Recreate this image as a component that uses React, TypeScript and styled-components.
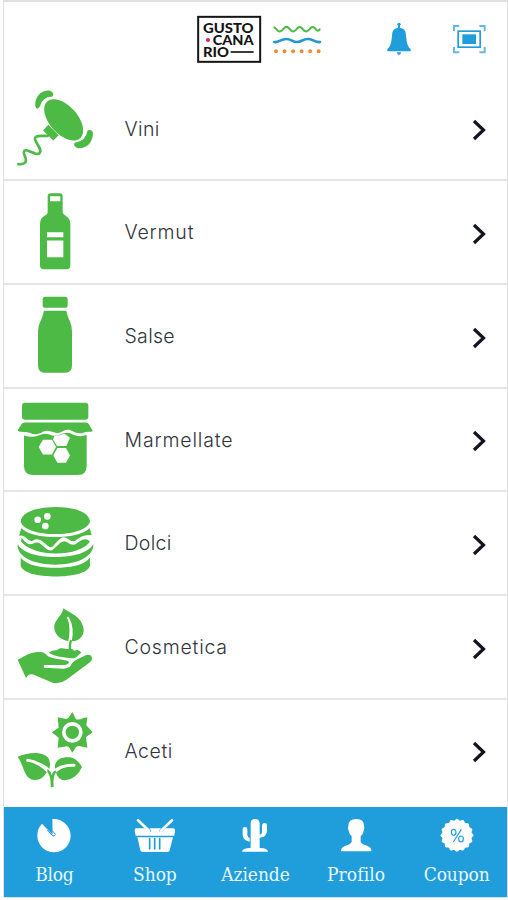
import React from "react";
import styled, { createGlobalStyle } from "styled-components";

const GREEN = "#4cba45";
const BLUE = "#209edb";

const GlobalStyle = createGlobalStyle`
  * { box-sizing: border-box; }
  body { margin: 0; background: #fff; }
`;

const Screen = styled.div`
  display: flex;
  flex-direction: column;
  width: 508px;
  height: 900px;
  padding: 0 0 2px 3px;
  background: #fff;
`;

const Frame = styled.div`
  display: flex;
  flex: 1;
  flex-direction: column;
  border: 1px solid #e2e2e2;
  border-top: 2px solid #e0e0e0;
  border-bottom-color: #cfe6f2;
`;

const Header = styled.header`
  display: flex;
  flex: none;
  height: 75.700px;
  padding-left: 192px;

  svg { display: block; flex: none; }
`;

const Marks = styled.div`
  display: flex;
  gap: 9px;
  width: 190px;
`;

const Actions = styled.div`
  display: flex;
  gap: 37px;
`;

const List = styled.ul`
  display: flex;
  flex: none;
  flex-direction: column;
  margin: 0;
  padding: 0;
  list-style: none;
`;

const Row = styled.li`
  display: flex;
  align-items: stretch;
  height: 103.7px;
  padding-left: 12px;
  border-bottom: 2px solid #e6e6e6;

  &:last-child { border-bottom: 0; }
`;

const RowIcon = styled.svg`
  display: block;
  flex: none;
  width: 80px;
  height: 100px;
  fill: ${GREEN};
`;

const Label = styled.span<{ $tracking: number }>`
  flex: 1;
  padding: 38px 0 0 28.500px;
  color: #32343c;
  font: 300 19.500px/26px Inter, "Open Sans", sans-serif;
  letter-spacing: ${(p) => p.$tracking}px;
`;

const Chevron = styled.svg`
  display: block;
  flex: none;
  width: 18px;
  height: 24px;
  margin: 40.500px 19px 0 0;
  fill: none;
  stroke: #11131f;
  stroke-width: 3.2;
`;

const Nav = styled.nav`
  display: grid;
  grid-template-columns: repeat(5, 1fr);
  flex: none;
  height: 90px;
  margin-top: auto;
  background: ${BLUE};
`;

const Tab = styled.a`
  display: flex;
  flex-direction: column;
  align-items: center;
  padding-top: 9.500px;
  color: #e9f6fd;
`;

const TabIcon = styled.svg`
  display: block;
  width: 50px;
  height: 37px;
  fill: #fff;
`;

const TabLabel = styled.span<{ $tracking: number }>`
  margin-top: 7.500px;
  font: 400 19px/26px "DejaVu Serif Condensed", "DejaVu Serif", serif;
  font-stretch: condensed;
  letter-spacing: ${(p) => p.$tracking}px;
  white-space: nowrap;
`;

const GustoLogo = () => (
  <svg width="66" height="74" viewBox="48 6 198 222">
    <rect x="54.5" y="50.500" width="186" height="135" fill="#fff" stroke="#151515" strokeWidth="6" />
    <g fill="#151515" fontFamily="Lato, sans-serif" fontWeight="900" fontSize="38">
      <text x="69" y="100" textLength="152" lengthAdjust="spacingAndGlyphs">GUSTO</text>
      <text x="98" y="136" textLength="123" lengthAdjust="spacingAndGlyphs">CANA</text>
      <text x="69" y="170" textLength="78" lengthAdjust="spacingAndGlyphs">RIO</text>
    </g>
    <circle cx="84" cy="120" r="6" fill="#e0195d" />
    <path d="M152 156H221" stroke="#151515" strokeWidth="5" />
  </svg>
);

const WavesLogo = () => (
  <svg width="52" height="74" viewBox="273 6 156 222" fill="none" strokeLinecap="round">
    <path d="M283 82L294 92Q300 97 306 91L314 83Q320 78 326 84L334 92Q340 97 346 91L353 84Q359 78 365 84L373 92Q379 97 385 91L392 84Q398 78 404 84L411 91Q415 94 419 88" stroke="#4cba45" strokeWidth="6" />
    <path d="M283 126C296 128 303 117 318 117C334 117 338 127 352 126C366 125 370 116 386 117C400 118 406 128 420 126" stroke="#2397d0" strokeWidth="8" />
    <path d="M288 154H417" stroke="#ed8a35" strokeWidth="12" strokeDasharray="0 25.6" />
  </svg>
);

const BellIcon = () => (
  <svg width="28" height="74" viewBox="48 6 84 222" fill={BLUE}>
    <circle cx="87" cy="73" r="5" />
    <path d="M84 73H90V83Q105 86 107 98L110 124Q113 141 122 147V154H52V147Q61 141 64 124L67 98Q69 86 84 83Z" />
    <path d="M80 157H94Q92 165 87 165T80 157Z" />
  </svg>
);

const ScanIcon = () => (
  <svg width="36" height="74" viewBox="243 6 108 222" fill="none" stroke={BLUE}>
    <path d="M252 94V78H268M328 78H344V94M344 141V157H328M268 157H252V141" stroke="#65b8e2" strokeWidth="6" />
    <rect x="264.500" y="93.500" width="66" height="48" strokeWidth="5" />
    <rect x="277" y="103" width="41" height="29" fill={BLUE} stroke="none" />
  </svg>
);

type RowItem = { name: string; tracking: number; top: number; art: React.ReactNode };

const rows: RowItem[] = [
  {
    name: "Vini", tracking: 0.4, top: -6.6,
    art: (
      <>
        <ellipse cx="191" cy="119" rx="74" ry="42" transform="rotate(48 191 119)" />
        <path d="M106 78C103 50 124 29 148 31Q159 34 160 44L157 49Q127 50 119 80L113 86Q108 86 106 78Z" />
        <path d="M263 151L269 149Q279 151 279 162C276 190 258 205 235 204Q222 201 222 190L227 187Q256 184 263 151Z" />
        <path d="M145 134L176 165L160 181L129 151Z" />
        <path d="M143 167C127 168 108 164 105 174C102 185 130 207 118 219C107 230 84 204 74 211C63 219 89 239 73 249Q66 253 55 252" fill="none" stroke={GREEN} strokeWidth="8" strokeLinecap="round" />
      </>
    ),
  },
  {
    name: "Vermut", tracking: 0.8, top: -10.5,
    art: (
      <>
        <path fillRule="evenodd" d="M151 26H180Q188 26 188 35V84Q189 89 196 93Q211 102 211 118V242Q211 254 200 254H131Q120 254 120 242V118Q120 102 134 94Q143 89 143 84V35Q143 26 151 26ZM150 35V50H181V35Z" />
        <path fill="#fff" d="M141 143H190V158H141ZM141 168H190V218H141Z" />
      </>
    ),
  },
  {
    name: "Salse", tracking: 0.3, top: -8.4,
    art: (
      <>
        <rect x="128" y="27" width="75" height="33" rx="8" />
        <path d="M132 69H199Q203 88 210 101Q216 115 216 130V232Q216 255 193 255H137Q114 255 114 232V130Q114 115 121 101Q128 88 132 69Z" />
      </>
    ),
  },
  {
    name: "Marmellate", tracking: 0.82, top: -9.3,
    art: (
      <>
        <rect x="66" y="32" width="199" height="51" rx="9" />
        <path d="M74 91H259Q264 91 267 97L278 116Q277 120 270 119C252 117 250 126 234 123C219 121 214 111 201 113C186 115 184 125 168 122C154 119 142 112 130 118C117 126 103 130 91 123Q80 119 61 119Q52 118 54 113L65 96Q68 91 74 91Z" />
        <path d="M72 130Q96 138 116 130Q134 121 148 127Q166 135 185 126Q202 117 220 128Q239 136 260 129V222Q260 249 233 249H100Q72 249 72 222Z" />
        <g fill="#fff">
          <path d="M129 143H156L168 165L156 187H129L116 165Z" />
          <path d="M172 168H198L210 190L198 212H172L160 190Z" />
          <path d="M163 132Q181 131 193 124L210 137L199 162H171L159 142Z" />
        </g>
      </>
    ),
  },
  {
    name: "Dolci", tracking: 0.3, top: -10.2,
    art: (
      <>
        <path d="M62 79C64 49 113 35 167 35S268 49 270 79C261 104 216 116 166 116S70 104 62 79Z" />
        <g fill="#fff"><circle cx="113" cy="73" r="10" /><circle cx="142" cy="63" r="10" /><circle cx="136" cy="92" r="10" /></g>
        <path d="M64 98C82 118 125 125 166 125S250 118 269 98L275 119Q257 117 245 123Q234 129 226 136Q217 141 208 133Q190 116 173 137L158 153Q151 159 142 150L126 137Q111 127 98 136Q88 139 79 128Q69 117 57 121Z" />
        <path d="M65 128Q69 130 74 138Q86 150 99 145Q112 137 124 147L139 160Q151 170 162 160L181 142Q193 133 204 142Q216 152 228 146Q246 129 261 132L270 138C257 160 213 174 168 174S79 160 63 138Z" />
        <path d="M53 146C67 173 113 185 166 185S265 173 280 146C282 187 225 208 166 208S49 187 53 146Z" />
        <path d="M62 187C83 211 124 217 166 217S250 211 270 187V210C266 233 215 243 166 243S67 233 62 210Z" />
      </>
    ),
  },
  {
    name: "Cosmetica", tracking: 0.78, top: -11.1,
    art: (
      <>
        <path d="M190 26C208 39 246 51 251 88C253 112 232 127 214 124Q220 86 203 53Q213 90 205 124C182 121 160 103 163 79C164 61 187 48 190 26Z" />
        <path d="M204 54C215 73 218 98 212 126L209 150" fill="none" stroke="#fff" strokeWidth="6" strokeLinecap="round" />
        <path d="M213 121Q208 135 210 151" fill="none" stroke={GREEN} strokeWidth="7" />
        <path d="M146 159Q158 150 172 152C180 139 194 151 206 147Q219 146 223 153Q238 147 244 159C234 166 230 176 216 176Q200 174 184 172Q159 167 146 159Z" />
        <path d="M53 180C80 167 93 155 119 157Q132 156 144 170Q158 178 179 179L202 183Q211 187 203 195Q195 199 177 198L134 196V204L190 207Q209 207 216 191Q221 183 235 177L259 166Q276 163 276 177Q276 184 263 193L199 240Q180 254 160 250L103 226Q95 221 85 226L78 235Z" />
        <path d="M135 200H189Q211 201 212 185" fill="none" stroke="#fff" strokeWidth="8" strokeLinecap="round" />
      </>
    ),
  },
  {
    name: "Aceti", tracking: 0.55, top: -6,
    art: (
      <>
        <path d="M217 30L228 52Q240 54 250 48L262 46L259 70L278 91L258 105L262 137L237 132Q227 132 225 140L217 152L209 139Q206 130 193 134L173 137L176 107L155 91L176 77L173 46L198 51Q207 49 209 42Z" />
        <circle cx="217" cy="91" r="31" fill="#fff" />
        <circle cx="217" cy="91" r="20" />
        <path d="M53 164C86 150 128 147 145 168Q153 178 148 201Q130 180 85 174Q119 182 141 209Q128 235 103 234C71 232 72 189 53 164Z" />
        <path d="M165 200C161 171 189 163 210 166Q232 170 246 195Q230 232 195 235Q173 234 167 209Q187 190 222 190Q187 184 165 200Z" />
        <path d="M83 175Q116 179 145 209M166 207Q188 188 222 190" fill="none" stroke="#fff" strokeWidth="9" strokeLinecap="round" />
        <path d="M142 201Q153 207 155 220Q157 209 166 205L169 210Q158 220 161 255L152 256Q153 221 142 210Z" />
      </>
    ),
  },
];

type TabItem = { name: string; tracking: number; box: string; art: React.ReactNode };

const basketBars = [448, 463, 478];

const sealPoints = Array.from({ length: 96 }, (_, i) => {
  const a = (i / 96) * Math.PI * 2;
  const r = 47 + 2.5 * Math.cos(a * 16);
  return `${(618 + r * Math.cos(a)).toFixed(1)},${(105 + r * Math.sin(a)).toFixed(1)}`;
}).join(" ");

const tabs: TabItem[] = [
  {
    name: "Blog", tracking: -0.25, box: "87 50 150 111",
    art: (
      <>
        <path d="M157 56C188 54 212 78 212 106A50 50 0 0 1 112 106Q112 83 126 70L158 103Z" />
        <path d="M143 90L156 105Q163 111 166 103Q166 99 158 93" fill="none" stroke={BLUE} strokeWidth="3" strokeLinecap="round" />
      </>
    ),
  },
  {
    name: "Shop", tracking: -0.1, box: "389 50 150 111",
    art: (
      <>
        <path d="M413 60L446 91M515 60L482 91" fill="none" stroke="#fff" strokeWidth="8" strokeLinecap="round" />
        <path d="M407 84H434L443 93Q449 97 453 91L447 84H482L476 91Q481 97 487 93L496 84H520Q525 85 524 92L522 106H406L403 91Q403 84 407 84Z" />
        <path d="M411 111H518L508 150Q507 155 502 155H427Q421 155 420 150Z" />
        {basketBars.map((x) => <path key={x} d={`M${x} 115V146`} stroke={BLUE} strokeWidth="5" strokeLinecap="round" />)}
      </>
    ),
  },
  {
    name: "Aziende", tracking: -0.1, box: "-60 50 150 111",
    art: (
      <>
        <path d="M2 143V69Q2 56 15 56T29 69V103Q37 102 36 93V75Q37 68 44 68T51 75V91Q51 109 29 112V143Q54 144 54 154H-24Q-24 144 2 143Z" />
        <path d="M-22 86Q-22 80 -15 80T-8 86V104Q-7 111 -1 113V124Q-22 120 -22 103Z" />
      </>
    ),
  },
  {
    name: "Profilo", tracking: 0.1, box: "242 50 150 111",
    art: <path d="M317 56Q341 55 341 77Q344 81 340 91Q338 103 331 108V125Q334 132 352 137Q364 142 363 153H272Q271 142 284 137Q301 132 304 125V108Q297 103 295 91Q290 84 294 77Q294 56 317 56Z" />,
  },
  {
    name: "Coupon", tracking: -0.1, box: "543 50 150 111",
    art: (
      <>
        <polygon points={sealPoints} />
        <g fill="none" stroke={BLUE} strokeWidth="3.500">
          <ellipse cx="608" cy="96" rx="7" ry="9" />
          <ellipse cx="630" cy="116" rx="7" ry="9" />
          <path d="M631 87L607 125" />
        </g>
      </>
    ),
  },
];

export default function App() {
  return (
    <Screen>
      <GlobalStyle />
      <Frame>
        <Header>
          <Marks>
            <GustoLogo />
            <WavesLogo />
          </Marks>
          <Actions>
            <BellIcon />
            <ScanIcon />
          </Actions>
        </Header>
        <List>
          {rows.map((r) => (
            <Row key={r.name}>
              <RowIcon viewBox={`48 ${r.top} 240 300`}>{r.art}</RowIcon>
              <Label $tracking={r.tracking}>{r.name}</Label>
              <Chevron viewBox="0 0 18 24">
                <path d="M4 3L13.500 12L4 21" />
              </Chevron>
            </Row>
          ))}
        </List>
        <Nav>
          {tabs.map((t) => (
            <Tab key={t.name}>
              <TabIcon viewBox={t.box}>{t.art}</TabIcon>
              <TabLabel $tracking={t.tracking}>{t.name}</TabLabel>
            </Tab>
          ))}
        </Nav>
      </Frame>
    </Screen>
  );
}
